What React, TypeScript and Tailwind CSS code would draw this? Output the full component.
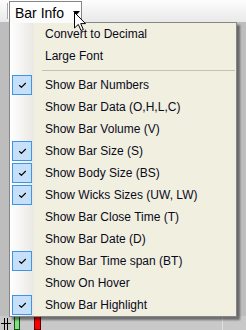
import { Check } from 'lucide-react';

const ITEMS = [
  { label: 'Show Bar Numbers', checked: true },
  { label: 'Show Bar Data (O,H,L,C)', checked: false },
  { label: 'Show Bar Volume (V)', checked: false },
  { label: 'Show Bar Size (S)', checked: true },
  { label: 'Show Body Size (BS)', checked: true },
  { label: 'Show Wicks Sizes (UW, LW)', checked: true },
  { label: 'Show Bar Close Time (T)', checked: false },
  { label: 'Show Bar Date (D)', checked: false },
  { label: 'Show Bar Time span (BT)', checked: true },
  { label: 'Show On Hover', checked: false },
  { label: 'Show Bar Highlight', checked: true },
];

function MenuRow({ label, checked }: { label: string; checked?: boolean }) {
  return (
    <div className="flex h-[22px] items-center">
      <div className="flex h-full w-[24px] shrink-0 items-center justify-center bg-gradient-to-r from-white to-[#e9e8e3]">
        {checked && (
          <div className="flex h-[20px] w-[20px] items-center justify-center border border-[#3d95e8] bg-[#c7e0fa]">
            <Check className="h-[9px] w-[9px] text-black" strokeWidth={3} />
          </div>
        )}
      </div>
      <span className="whitespace-nowrap pl-[11px] text-[12px] leading-none text-[#0a0a1a]">{label}</span>
    </div>
  );
}

export default function App() {
  return (
    <div className="relative flex h-[330px] w-[246px] flex-col overflow-hidden bg-[#bdbdbd] font-['Liberation_Sans',Arial,sans-serif]">
      {/* toolbar */}
      <div className="flex h-[22px] shrink-0 items-center bg-gradient-to-b from-[#fdfdfd] to-[#e9e9e9]">
        <div className="ml-[7px] h-[16px] w-[2px] border-l border-[#a9a9a9] bg-white" />
      </div>

      {/* chart area */}
      <div className="flex flex-1 flex-col justify-end">
        <div className="flex h-[14px] items-end bg-[#c9c9c9]">
          <div className="relative ml-[1px] flex h-[12px] w-[10px] justify-between px-[3px]">
            <div className="w-px bg-black" />
            <div className="w-px bg-black" />
            <div className="absolute bottom-[6px] left-0 h-px w-[10px] bg-black" />
          </div>
          <div className="ml-[3px] h-[14px] w-[6px] border border-[#1a4d1a] bg-[#7ee07e]" />
          <div className="ml-[14px] h-[14px] w-[7px] border border-[#5a0000] bg-[#ff0000]" />
          <div className="ml-[181px] h-full w-px bg-[#dedede]" />
        </div>
      </div>

      {/* dropdown menu */}
      <div className="absolute left-[9px] top-[22px] w-[228px] border border-[#868686] bg-[#f1efe0] shadow-[3px_3px_2px_rgba(0,0,0,0.45)]">
        <MenuRow label="Convert to Decimal" />
        <MenuRow label="Large Font" />
        <div className="flex h-[7px] items-center">
          <div className="h-full w-[24px] shrink-0 bg-gradient-to-r from-white to-[#e9e8e3]" />
          <div className="ml-[8px] mr-[1px] h-px flex-1 bg-[#c5c2b2]" />
        </div>
        {ITEMS.map((item) => (
          <MenuRow key={item.label} label={item.label} checked={item.checked} />
        ))}
      </div>

      {/* Bar Info button */}
      <div className="absolute left-[9px] top-[1px] flex h-[22px] w-[73px] items-center gap-[9px] border border-b-0 border-[#868686] bg-gradient-to-b from-white to-[#fbfbfb] pl-[5px]">
        <span className="whitespace-nowrap text-[14px] leading-none text-black">Bar Info</span>
        <svg width="7" height="4" viewBox="0 0 7 4" className="mt-[1px] shrink-0">
          <path d="M0 0 H7 L3.5 4 Z" fill="#000" />
        </svg>
      </div>

      {/* mouse cursor */}
      <svg className="absolute left-[74px] top-[12px]" width="13" height="20" viewBox="0 0 13 20">
        <path d="M0.5 0.5 V16 L4.3 12.4 L7 18.5 L9.3 17.5 L6.7 11.6 L11.5 11.6 Z" fill="#fff" stroke="#000" strokeWidth="1" strokeLinejoin="miter" />
      </svg>
    </div>
  );
}
